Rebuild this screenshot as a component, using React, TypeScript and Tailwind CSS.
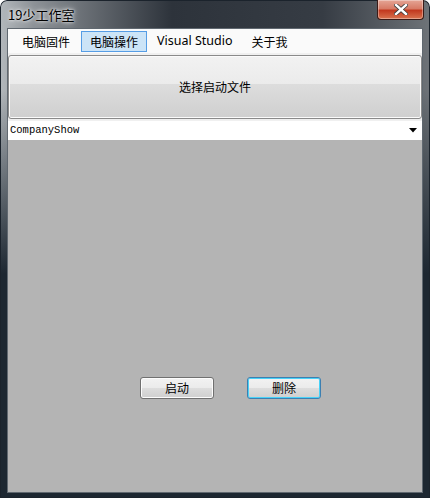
import React from 'react'

const cjk = { fontFamily: '"Noto Sans CJK SC", "Liberation Sans", sans-serif' }

function Tab({ label, active }: { label: string; active?: boolean }) {
  return (
    <div
      className={
        'flex h-[21px] items-center px-[8px] text-[12px] leading-none text-black ' +
        (active ? 'border border-[#569de5] bg-[#cce4f7]' : 'border border-transparent')
      }
      style={cjk}
    >
      {label}
    </div>
  )
}

function WinButton({ label, focused }: { label: string; focused?: boolean }) {
  return (
    <div
      className={
        'flex h-[22px] w-[74px] items-center justify-center rounded-[3px] border text-[12px] text-black ' +
        'bg-[linear-gradient(to_bottom,#f2f2f2_0%,#ebebeb_50%,#dddddd_50%,#cfcfcf_100%)] ' +
        (focused
          ? 'border-[#3c7fb1] shadow-[inset_0_0_0_1px_#48d2f8]'
          : 'border-[#707070] shadow-[inset_0_0_0_1px_#fcfcfc]')
      }
      style={cjk}
    >
      {label}
    </div>
  )
}

export default function App() {
  return (
    <div className="h-[498px] w-[430px] overflow-hidden bg-white">
      <div className="flex h-[498px] w-[430px] flex-col rounded-t-[7px] bg-[linear-gradient(to_bottom,transparent_0%,transparent_18%,#1d2731_55%),linear-gradient(to_right,#b3b8bc_0%,#8c9196_8%,#2d333b_40%,#363c44_75%,#6e7378_100%)] px-[7px] pb-[5px] shadow-[inset_0_0_0_1px_#1b232c]">
        {/* title bar */}
        <div className="relative flex h-[28px] shrink-0 items-center">
          <span
            className="pl-[1px] pt-[1px] text-[13px] text-black [text-shadow:0_0_6px_#ffffff,0_0_3px_#ffffff]"
            style={cjk}
          >
            19少工作室
          </span>
          <div className="absolute right-[-1px] top-0 flex h-[20px] w-[47px] items-center justify-center rounded-b-[4px] border border-t-0 border-[#3b1b17] bg-[linear-gradient(to_bottom,#e5a595_0%,#d77b66_45%,#c2391f_55%,#d9734f_100%)] shadow-[inset_0_0_0_1px_rgba(255,255,255,0.35)]">
            <svg width="14" height="11" viewBox="0 0 14 11">
              <path
                d="M2 1 L12 10 M12 1 L2 10"
                stroke="#3a3a3a"
                strokeWidth="4"
                strokeLinecap="square"
              />
              <path
                d="M2 1 L12 10 M12 1 L2 10"
                stroke="#ffffff"
                strokeWidth="2.4"
                strokeLinecap="square"
              />
            </svg>
          </div>
        </div>

        {/* client area */}
        <div className="flex flex-1 flex-col border border-[#606870] bg-[#b4b4b4]">
          <div className="flex h-[24px] shrink-0 items-center gap-[2px] bg-[#fafafa] pl-[5px] pt-[1px]">
            <Tab label="电脑固件" />
            <Tab label="电脑操作" active />
            <div
              className="flex h-[21px] items-center px-[8px] text-[12.5px] leading-none text-black"
              style={{ fontFamily: '"Noto Sans", "Liberation Sans", sans-serif' }}
            >
              Visual Studio
            </div>
            <Tab label="关于我" />
          </div>

          <div className="bg-[#f0f0f0] pb-[2px] pt-[2px]">
            <div
              className="flex h-[64px] items-center justify-center rounded-[3px] border border-[#8a8a8a] bg-[linear-gradient(to_bottom,#f2f2f2_0%,#ebebeb_45%,#dddddd_45%,#cfcfcf_100%)] text-[12px] text-black shadow-[inset_0_0_0_1px_#fbfbfb]"
              style={cjk}
            >
              选择启动文件
            </div>
          </div>

          <div className="flex h-[19px] shrink-0 items-center justify-between bg-white pl-[2px] pr-[5px]">
            <span
              className="text-[10.5px] text-black"
              style={{ fontFamily: '"Liberation Mono", "DejaVu Sans Mono", monospace' }}
            >
              CompanyShow
            </span>
            <svg width="8" height="5" viewBox="0 0 8 5">
              <path d="M0 0 H8 L4 4.5 Z" fill="#000000" />
            </svg>
          </div>

          <div className="flex flex-1 flex-col">
            <div className="h-[237px]" />
            <div className="flex gap-[33px] pl-[132px]">
              <WinButton label="启动" />
              <WinButton label="删除" focused />
            </div>
          </div>
        </div>
      </div>
    </div>
  )
}
